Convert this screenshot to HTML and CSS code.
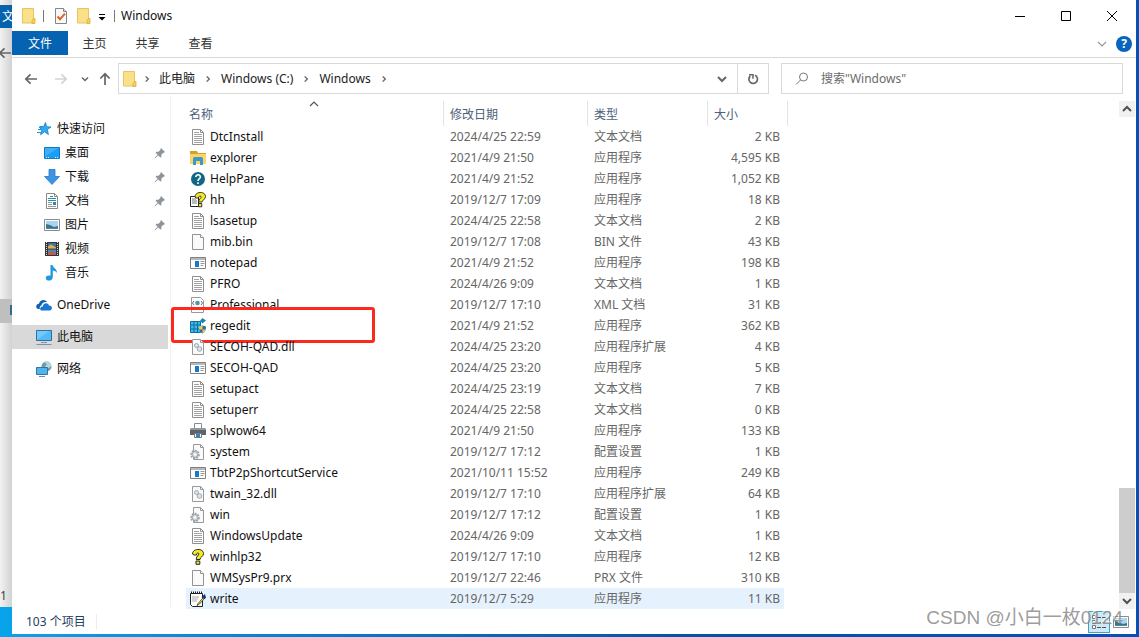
FILE: index.html
```html
<!DOCTYPE html>
<html lang="zh-CN">
<head>
<meta charset="utf-8">
<meta name="viewport" content="width=device-width, initial-scale=1">
<title>Windows</title>
<link rel="stylesheet" href="styles.css">
</head>
<body>
<svg class="sprite" aria-hidden="true">
  <symbol id="folder" viewBox="0 0 16 16"><path d="M1.500.5h11v14.500h-11z" fill="#fbe08a" stroke="#e6c460"/><path d="M12.500 10.500h1.500v5h-3v-3z" fill="#f5cf5c" stroke="#dcae38" stroke-width=".8"/></symbol>
  <symbol id="check-doc" viewBox="0 0 16 16"><path d="M2.500.5h8l3 3v12h-11z" fill="#f8f8f8" stroke="#858585"/><path d="M10.500.5v3h3" fill="#ddd" stroke="#858585"/><path d="M4.500 8.500l2.500 2.700 5-5.500" fill="none" stroke="#e0602a" stroke-width="2"/></symbol>
  <symbol id="chev-down" viewBox="0 0 16 16"><path d="M4 6l4 4 4-4" fill="none" stroke="currentColor" stroke-width="2"/></symbol>
  <symbol id="chev-thin" viewBox="0 0 16 16"><path d="M4 6l4 4 4-4" fill="none" stroke="currentColor" stroke-width="1.200"/></symbol>
  <symbol id="chev-right" viewBox="0 0 16 16"><path d="M6.500 5l3 3-3 3" fill="none" stroke="currentColor" stroke-width="1.600"/></symbol>
  <symbol id="back" viewBox="0 0 16 16"><path d="M14 8H3M7.500 3.300L2.800 8l4.700 4.700" fill="none" stroke="currentColor" stroke-width="1.700"/></symbol>
  <symbol id="pin" viewBox="0 0 12 12"><path d="M7 1l4 4-1 .8-.7-.1-2 2 .2 2-1 .9-2.300-2.200L1 11.500.600 11l3-3.200L1.500 5.600l.9-.9 2.100.1 2-2-.1-.9z" fill="#8c959d"/></symbol>
  <symbol id="star" viewBox="0 0 16 16"><path d="M9.500 1.500l1.200 4.300 4.300.2-3.600 2.600 1 4.900-3.900-2.700-4 3 1.300-4.900L3 6l4.500-.2z" fill="#35a9ee" stroke="#1582c8" stroke-width=".8"/><path d="M4 5.500h3M2 8.500h4M1 11.500h4" stroke="#1f92dc"/></symbol>
  <symbol id="desktop" viewBox="0 0 16 16"><path d="M.5 2.500h15v11H.5z" fill="#1a9df5" stroke="#1576c2"/><path d="M1 11.500L14.500 3H1z" fill="#3cb0fa"/><path d="M2 12.500h1m1 0h1m6 0h1m1 0h1" stroke="#d9f0ff"/></symbol>
  <symbol id="download" viewBox="0 0 16 16"><path d="M5 .5h6v7h4.500L8 15.500.5 7.500H5z" fill="#3c95e4" stroke="#2877c4" stroke-width=".8"/></symbol>
  <symbol id="document" viewBox="0 0 16 16"><path d="M2.500.5h8l3 3v12h-11z" fill="#fff" stroke="#8a8a8a"/><path d="M10.500.5v3h3" fill="none" stroke="#8a8a8a"/><path d="M6 3.500h3M4 5.500h8M4 7.500h8" stroke="#288fa6"/><path d="M4 9.500h4M4 11.500h4M4 13.500h8" stroke="#999"/><path d="M9 9h3v3H9z" fill="#2b8aa6"/></symbol>
  <symbol id="picture" viewBox="0 0 16 16"><path d="M.5 2.500h15v11H.5z" fill="#fff" stroke="#8c8c8c"/><path d="M2 4h12v8H2z" fill="#a8d6f2"/><path d="M2 7l4 1 4 2 4-1v3H2z" fill="#3d7580"/><path d="M2 11h12v1H2z" fill="#4e87b7"/></symbol>
  <symbol id="video" viewBox="0 0 16 16"><path d="M1 1h14v14H1z" fill="#353535"/><path d="M2.500 1v14m11-14v14" stroke="#ddd" stroke-dasharray="1 1"/><path d="M4 2h8v5.500H4z" fill="#3d6fb5"/><path d="M4 5.500l3-2 5 3v1H4z" fill="#e2b53a"/><path d="M4 8.500h8V14H4z" fill="#5682bf"/><path d="M4 12l4-2 4 3v1H4z" fill="#c05b43"/></symbol>
  <symbol id="music" viewBox="0 0 16 16"><path d="M6.500 0h2c.4 3 5 4 4.500 8.500-.2-1.600-1.900-2.500-4.200-2.900V12c0 4.700-7.300 4.700-7 .7.200-2 2.700-2.800 4.700-2z" fill="#1899e0"/></symbol>
  <symbol id="cloud" viewBox="0 0 16 16"><path d="M.5 11c-1-3 1-4.500 2.500-4.300C4 2 9.500 2 11 5c-4-.3-5.500 2-5.500 3.500C3.500 9 3.500 11 4 12H2z" fill="#0c61b1"/><path d="M5 13.500c-2-2 0-4.500 1.800-4C7.300 5.500 12 5.200 13 8.500c4 0 3.500 5 .5 5z" fill="#1877cf"/></symbol>
  <symbol id="pc" viewBox="0 0 16 16"><path d="M.5 1.500h15v10H.5z" fill="#52baf8" stroke="#316f9a"/><path d="M1 11L13 2H1z" fill="#73c9fb"/><path d="M5 13.500h6M.5 15.500h15" stroke="#7795a6"/></symbol>
  <symbol id="network" viewBox="0 0 16 16"><circle cx="10.500" cy="5.500" r="5" fill="#739cab"/><path d="M8 1l3 2-2 3 4 1 2-2V3l-3-2z" fill="#b6d8dd"/><path d="M.5 6.500h11v7H.5z" fill="#50b5ef" stroke="#32759f"/><path d="M3 15.500h6" stroke="#6f8d9d"/></symbol>
  <symbol id="text" viewBox="0 0 16 16"><path d="M2.500.5h8l3 3v12h-11z" fill="#fff" stroke="#8f8f8f"/><path d="M10.500.5v3h3" fill="none" stroke="#8f8f8f"/><path d="M4 3.500h5M4 5.500h8M4 7.500h8M4 9.500h8M4 11.500h8M4 13.500h8" stroke="#a3a3a3"/></symbol>
  <symbol id="blank" viewBox="0 0 16 16"><path d="M2.500.5h8l3 3v12h-11z" fill="#fafafa" stroke="#939393"/><path d="M10.500.5v3h3" fill="#fff" stroke="#939393"/></symbol>
  <symbol id="explorer" viewBox="0 0 16 16"><path d="M0 1h7l1 2h8v11H0z" fill="#d9a124"/><path d="M0 4h16v10H0z" fill="#fbd567"/><path d="M3 15V8.500L4 7h8l1 1.500V15h-3v-4H6v4z" fill="#3d98ce"/></symbol>
  <symbol id="help" viewBox="0 0 16 16"><circle cx="8" cy="8" r="7" fill="#106783"/><path d="M5.800 6c.1-3.200 4.900-2.800 4.500.2C10 8 8 7.700 8 10M8 11.200v1.700" fill="none" stroke="#fff" stroke-width="1.600"/></symbol>
  <symbol id="question" viewBox="0 0 16 16"><path d="M2.500 5c0-6 11-6 11-.5 0 3.500-3.500 3.200-3.500 6H6.300C6 7 9 6.500 8.800 4.800 8.500 3.300 6.500 3.800 6.500 6H4zM6 12h3.800v3.300H6z" fill="#f6e91d" stroke="#222"/></symbol>
  <symbol id="hh" viewBox="0 0 16 16"><path d="M.5 4.500h8v10h-8z" fill="#fff" stroke="#222"/><path d="M2 7h4m-4 2h5m-5 2h5" stroke="#777"/><path d="M5 5c0-6 10.500-6 10.500-.5 0 3.500-3.500 3.200-3.500 5.500H8.700c-.2-3 2.600-3.700 2.400-5.200-.2-1.300-2.600-1-2.600 1.200H6zM8.500 11.500h3.300v3.300H8.500z" fill="#f6e91d" stroke="#222" stroke-width=".9"/></symbol>
  <symbol id="app" viewBox="0 0 16 16"><path d="M.5 2.500h15v11H.5z" fill="#fff" stroke="#808080"/><path d="M1 3h14v2H1z" fill="#b5b8bc"/><path d="M5 6h4v6H5z" fill="#1379c8"/><path d="M10.500 6.500h4m-4 2h4m-4 2h3" stroke="#9a9a9a"/></symbol>
  <symbol id="xml" viewBox="0 0 16 16"><path d="M1.500.5h9l3 3v12h-12z" fill="#fff" stroke="#999"/><path d="M4 4L2.500 6 4 8m7-4l1.500 2L11 8" fill="none" stroke="#666"/><circle cx="7.500" cy="6" r="2.300" fill="#4b98a8"/><path d="M4 11.500h7" stroke="#aaa"/></symbol>
  <symbol id="regedit" viewBox="0 0 16 16"><path d="M.5 3.500h10v11H.5z" fill="#38bcec" stroke="#126d9e"/><path d="M4 3v12M7.500 3v12M0 7h11M0 11h11" stroke="#126d9e"/><path d="M12.500 0L16 2.500 12.500 5.500 10 2.700z" fill="#1686b8"/><path d="M9 8.500l3.500-1 3.500 1c0 4-1.500 6-3.500 7-2-1-3.500-3-3.500-7z" fill="#286da6"/><path d="M12.500 7.500v4H9V8.500zM12.500 11.500h3c-.5 2-1.500 3-3 4z" fill="#f3c550"/></symbol>
  <symbol id="dll" viewBox="0 0 16 16"><path d="M2.500.5h8l3 3v12h-11z" fill="#fafafa" stroke="#999"/><path d="M10.500.5v3h3" fill="none" stroke="#999"/><circle cx="6.500" cy="6.500" r="2" fill="#dde5ea" stroke="#9aa9b3"/><circle cx="9.500" cy="10" r="2.300" fill="#dde5ea" stroke="#9aa9b3"/></symbol>
  <symbol id="ini" viewBox="0 0 16 16"><path d="M3.500.5h7l3 3v12h-10z" fill="#fafafa" stroke="#999"/><path d="M10.500.5v3h3" fill="none" stroke="#999"/><circle cx="5" cy="10.500" r="4" fill="none" stroke="#9aa3a9" stroke-width="1.600" stroke-dasharray="2 1"/><circle cx="5" cy="10.500" r="3" fill="#d5dade" stroke="#9aa3a9"/><circle cx="5" cy="10.500" r="1.200" fill="#fff"/></symbol>
  <symbol id="printer" viewBox="0 0 16 16"><path d="M4.500.5h7v6h-7z" fill="#fff" stroke="#8c8c8c"/><path d="M1 5h14l1 2v5H0V7z" fill="#606468"/><path d="M1 5h14l1 2H0z" fill="#92979b"/><path d="M4.500 10.500h7v4h-7z" fill="#fff" stroke="#777"/><path d="M6 11h4v3H6z" fill="#2b87c9"/></symbol>
  <symbol id="write" viewBox="0 0 16 16"><path d="M.5 2.500h12v13H2.500l-2-2z" fill="#fff" stroke="#222"/><path d="M1 1.500h12" stroke="#222" stroke-width="2" stroke-dasharray="1 1"/><path d="M2 6h7M2 8h6M2 10h5" stroke="#aaa"/><path d="M14.500 5L8 12.500l-1 2L9.500 13 15 7z" fill="#f6df26" stroke="#222" stroke-width=".7"/><path d="M11.500 6L15 3l1 4-2 1z" fill="#1b2c8e"/></symbol>
</svg>

<div class="desktop">
  <div class="behind" aria-hidden="true">
    <span class="behind-tab">文</span>
    <svg class="behind-back"><use href="#back"/></svg>
    <span class="behind-row"></span>
    <span class="behind-count">1</span>
  </div>

  <div class="window">
    <header class="titlebar">
      <svg class="icon"><use href="#folder"/></svg>
      <i class="rule rule-first"></i>
      <svg class="icon"><use href="#check-doc"/></svg>
      <svg class="icon icon-second"><use href="#folder"/></svg>
      <svg class="customize" viewBox="0 0 8 8"><path d="M1 1.500h6" stroke="#000"/><path d="M.5 4h7L4 7.500z"/></svg>
      <i class="rule"></i>
      <h1 class="title">Windows</h1>
      <div class="controls">
        <button class="control" aria-label="最小化"><svg viewBox="0 0 10 10"><path d="M0 5.500h10"/></svg></button>
        <button class="control" aria-label="最大化"><svg viewBox="0 0 10 10"><path d="M.5.5h9v9h-9z"/></svg></button>
        <button class="control" aria-label="关闭"><svg viewBox="0 0 10 10"><path d="M0 0l10 10M10 0L0 10"/></svg></button>
      </div>
    </header>

    <nav class="ribbon">
      <button class="tab tab-file">文件</button>
      <button class="tab">主页</button>
      <button class="tab">共享</button>
      <button class="tab">查看</button>
      <div class="ribbon-end">
        <button class="plain expand" aria-label="展开功能区"><svg class="icon"><use href="#chev-thin"/></svg></button>
        <button class="help" aria-label="帮助">?</button>
      </div>
    </nav>

    <div class="address">
      <button class="plain nav" aria-label="后退"><svg class="icon"><use href="#back"/></svg></button>
      <button class="plain nav nav-off" aria-label="前进"><svg class="icon flip"><use href="#back"/></svg></button>
      <button class="plain recent" aria-label="最近位置"><svg class="small"><use href="#chev-down"/></svg></button>
      <button class="plain up" aria-label="上移"><svg class="icon turn"><use href="#back"/></svg></button>
      <div class="path">
        <svg class="icon"><use href="#folder"/></svg>
        <svg class="sep"><use href="#chev-right"/></svg>
        <a class="crumb" href="#">此电脑</a>
        <svg class="sep"><use href="#chev-right"/></svg>
        <a class="crumb" href="#">Windows (C:)</a>
        <svg class="sep"><use href="#chev-right"/></svg>
        <a class="crumb" href="#">Windows</a>
        <svg class="sep"><use href="#chev-right"/></svg>
        <button class="plain drop" aria-label="以前的位置"><svg class="icon"><use href="#chev-down"/></svg></button>
        <button class="plain refresh" aria-label="刷新"><svg viewBox="0 0 16 16" class="icon"><path d="M10 4.300A4.300 4.300 0 1 1 5.300 5" fill="none" stroke="#666" stroke-width="1.700"/><path d="M4 3.800h4v4" fill="none" stroke="#666" stroke-width="1.500"/></svg></button>
      </div>
      <label class="search">
        <svg class="icon" viewBox="0 0 16 16"><circle cx="9.500" cy="6" r="4" fill="none" stroke="#777"/><path d="M6.500 9L2 13.500" stroke="#777"/></svg>
        <input class="search-box" type="text" aria-label="搜索" placeholder='搜索"Windows"'>
      </label>
    </div>

    <main class="main">
      <nav class="tree">
        <a class="node" href="#"><svg class="icon"><use href="#star"/></svg>快速访问</a>
        <a class="node child" href="#"><svg class="icon"><use href="#desktop"/></svg>桌面<svg class="pin"><use href="#pin"/></svg></a>
        <a class="node child" href="#"><svg class="icon"><use href="#download"/></svg>下载<svg class="pin"><use href="#pin"/></svg></a>
        <a class="node child" href="#"><svg class="icon"><use href="#document"/></svg>文档<svg class="pin"><use href="#pin"/></svg></a>
        <a class="node child" href="#"><svg class="icon"><use href="#picture"/></svg>图片<svg class="pin"><use href="#pin"/></svg></a>
        <a class="node child" href="#"><svg class="icon"><use href="#video"/></svg>视频</a>
        <a class="node child" href="#"><svg class="icon"><use href="#music"/></svg>音乐</a>
        <a class="node group" href="#"><svg class="icon"><use href="#cloud"/></svg>OneDrive</a>
        <a class="node group selected" href="#"><svg class="icon"><use href="#pc"/></svg>此电脑</a>
        <a class="node group" href="#"><svg class="icon"><use href="#network"/></svg>网络</a>
      </nav>

      <div class="files">
        <table class="list">
          <colgroup><col class="col-name"><col class="col-date"><col class="col-type"><col class="col-size"></colgroup>
          <thead>
            <tr><th><span class="head">名称<svg class="sort"><use href="#chev-thin"/></svg></span></th><th><span class="head">修改日期</span></th><th><span class="head">类型</span></th><th><span class="head">大小</span></th></tr>
          </thead>
          <tbody>
            <tr><td><span class="name"><svg class="icon"><use href="#text"/></svg>DtcInstall</span></td><td>2024/4/25 22:59</td><td>文本文档</td><td>2 KB</td></tr>
            <tr><td><span class="name"><svg class="icon"><use href="#explorer"/></svg>explorer</span></td><td>2021/4/9 21:50</td><td>应用程序</td><td>4,595 KB</td></tr>
            <tr><td><span class="name"><svg class="icon"><use href="#help"/></svg>HelpPane</span></td><td>2021/4/9 21:52</td><td>应用程序</td><td>1,052 KB</td></tr>
            <tr><td><span class="name"><svg class="icon"><use href="#hh"/></svg>hh</span></td><td>2019/12/7 17:09</td><td>应用程序</td><td>18 KB</td></tr>
            <tr><td><span class="name"><svg class="icon"><use href="#text"/></svg>lsasetup</span></td><td>2024/4/25 22:58</td><td>文本文档</td><td>2 KB</td></tr>
            <tr><td><span class="name"><svg class="icon"><use href="#blank"/></svg>mib.bin</span></td><td>2019/12/7 17:08</td><td>BIN 文件</td><td>43 KB</td></tr>
            <tr><td><span class="name"><svg class="icon"><use href="#app"/></svg>notepad</span></td><td>2021/4/9 21:52</td><td>应用程序</td><td>198 KB</td></tr>
            <tr><td><span class="name"><svg class="icon"><use href="#text"/></svg>PFRO</span></td><td>2024/4/26 9:09</td><td>文本文档</td><td>1 KB</td></tr>
            <tr><td><span class="name"><svg class="icon"><use href="#xml"/></svg>Professional</span></td><td>2019/12/7 17:10</td><td>XML 文档</td><td>31 KB</td></tr>
            <tr><td><span class="name marked"><svg class="icon"><use href="#regedit"/></svg>regedit</span></td><td>2021/4/9 21:52</td><td>应用程序</td><td>362 KB</td></tr>
            <tr><td><span class="name"><svg class="icon"><use href="#dll"/></svg>SECOH-QAD.dll</span></td><td>2024/4/25 23:20</td><td>应用程序扩展</td><td>4 KB</td></tr>
            <tr><td><span class="name"><svg class="icon"><use href="#app"/></svg>SECOH-QAD</span></td><td>2024/4/25 23:20</td><td>应用程序</td><td>5 KB</td></tr>
            <tr><td><span class="name"><svg class="icon"><use href="#text"/></svg>setupact</span></td><td>2024/4/25 23:19</td><td>文本文档</td><td>7 KB</td></tr>
            <tr><td><span class="name"><svg class="icon"><use href="#text"/></svg>setuperr</span></td><td>2024/4/25 22:58</td><td>文本文档</td><td>0 KB</td></tr>
            <tr><td><span class="name"><svg class="icon"><use href="#printer"/></svg>splwow64</span></td><td>2021/4/9 21:50</td><td>应用程序</td><td>133 KB</td></tr>
            <tr><td><span class="name"><svg class="icon"><use href="#ini"/></svg>system</span></td><td>2019/12/7 17:12</td><td>配置设置</td><td>1 KB</td></tr>
            <tr><td><span class="name"><svg class="icon"><use href="#app"/></svg>TbtP2pShortcutService</span></td><td>2021/10/11 15:52</td><td>应用程序</td><td>249 KB</td></tr>
            <tr><td><span class="name"><svg class="icon"><use href="#dll"/></svg>twain_32.dll</span></td><td>2019/12/7 17:10</td><td>应用程序扩展</td><td>64 KB</td></tr>
            <tr><td><span class="name"><svg class="icon"><use href="#ini"/></svg>win</span></td><td>2019/12/7 17:12</td><td>配置设置</td><td>1 KB</td></tr>
            <tr><td><span class="name"><svg class="icon"><use href="#text"/></svg>WindowsUpdate</span></td><td>2024/4/26 9:09</td><td>文本文档</td><td>1 KB</td></tr>
            <tr><td><span class="name"><svg class="icon"><use href="#question"/></svg>winhlp32</span></td><td>2019/12/7 17:10</td><td>应用程序</td><td>12 KB</td></tr>
            <tr><td><span class="name"><svg class="icon"><use href="#blank"/></svg>WMSysPr9.prx</span></td><td>2019/12/7 22:46</td><td>PRX 文件</td><td>310 KB</td></tr>
            <tr class="hover"><td><span class="name"><svg class="icon"><use href="#write"/></svg>write</span></td><td>2019/12/7 5:29</td><td>应用程序</td><td>11 KB</td></tr>
          </tbody>
        </table>
      </div>

      <div class="scroll">
        <button class="plain arrow" aria-label="向上滚动"><svg class="icon upside"><use href="#chev-down"/></svg></button>
        <div class="track"><div class="thumb"></div></div>
        <button class="plain arrow" aria-label="向下滚动"><svg class="icon"><use href="#chev-down"/></svg></button>
      </div>
    </main>

    <footer class="status">
      <span class="count">103 个项目</span>
      <div class="views">
        <button class="plain view view-on" aria-label="详细信息"><svg class="icon" viewBox="0 0 16 16"><path d="M1.500 1.500h3v3h-3zM1.500 6.500h3v3h-3zM1.500 11.500h3v3h-3z" fill="#fff" stroke="#777"/><path d="M6 3.500h4m1 0h4M6 8.500h4m1 0h4M6 13.500h4m1 0h4" stroke="#555"/></svg></button>
        <button class="plain view" aria-label="大缩略图"><svg class="icon"><use href="#picture"/></svg></button>
      </div>
    </footer>
  </div>
  <div class="watermark">CSDN @小白一枚0124</div>
</div>
</body>
</html>
```
FILE: styles.css
```css
* { box-sizing: border-box; }

body {
  margin: 0;
  font: 12px/16px "Noto Sans", "Noto Sans CJK SC", sans-serif;
  color: #111;
}

button, input { font: inherit; color: inherit; }
a { color: inherit; text-decoration: none; }
svg { display: block; flex: none; }

.sprite { position: absolute; width: 0; height: 0; }
.icon { width: 16px; height: 16px; }
.small { width: 12px; height: 12px; }

.plain {
  display: flex;
  align-items: center;
  justify-content: center;
  padding: 0;
  border: 0;
  background: none;
}

.desktop {
  position: relative;
  display: flex;
  min-height: 100vh;
  padding: 0 3px 3px 12px;
  background: linear-gradient(90deg, #08a3ea 0, #0878c8 30%, #0751a8 60%, #0650b8 100%);
  overflow: hidden;
}

/* Sliver of the window underneath */
.behind {
  position: absolute;
  inset: 0 auto 30px 0;
  width: 12px;
  overflow: hidden;
  background: linear-gradient(90deg, #f2f2f2, #d2d2d2);
}
.behind-tab {
  position: absolute;
  top: 5px;
  left: 0;
  width: 12px;
  height: 23px;
  padding: 4px 0 0 2px;
  background: #0563ae;
  color: #fff;
}
.behind-back { position: absolute; top: 45px; left: -3px; width: 16px; height: 16px; color: #666; }
.behind-row {
  position: absolute;
  top: 299px;
  left: 0;
  width: 12px;
  height: 24px;
  background: linear-gradient(#2f6c8c, #2f6c8c) 10px 6px / 2px 10px no-repeat, #bfbfbf;
}
.behind-count { position: absolute; bottom: 3px; left: 0; color: #444; }

.window {
  position: relative;
  display: flex;
  flex: 1;
  flex-direction: column;
  min-width: 0;
  background: #fff;
}

.titlebar { display: flex; align-items: center; height: 31px; padding-left: 9px; }
.rule { width: 1px; height: 12px; background: #777; }
.rule-first { margin: 0 9px 0 6px; }
.icon-second { margin-left: 7px; }
.customize { width: 8px; height: 8px; margin: 2px 8px 0 6px; }
.title { margin: 0 0 0 6px; font-size: 12px; font-weight: 400; }
.controls { display: flex; margin-left: auto; padding-right: 1px; }
.control {
  display: grid;
  place-items: center;
  width: 46px;
  height: 30px;
  padding: 0;
  border: 0;
  background: none;
}
.control svg { width: 10px; height: 10px; fill: none; stroke: #000; overflow: visible; }

.ribbon { display: flex; height: 27px; border-bottom: 1px solid #d9d9d9; }
.tab { width: 53px; height: 24px; padding: 1px 0 0; border: 0; background: none; color: #333; }
.tab-file { width: 56px; background: #0563b1; color: #fff; }
.ribbon-end { display: flex; align-items: center; gap: 6px; margin-left: auto; padding-right: 4px; }
.expand { color: #999; }
.help {
  width: 16px;
  height: 16px;
  padding: 0;
  border: 0;
  border-radius: 50%;
  background: #0864bd;
  color: #fff;
  font-weight: 700;
  line-height: 16px;
}

.address { display: flex; align-items: flex-start; height: 37px; padding: 5px 13px 0 11px; color: #666; }
.nav { width: 30px; height: 31px; justify-content: flex-start; }
.nav-off { width: 26px; color: #d3d3d3; }
.flip { transform: scaleX(-1); }
.turn { transform: rotate(90deg); }
.upside { transform: rotate(180deg); }
.recent { width: 12px; height: 31px; }
.up { width: 27px; height: 31px; }
.path {
  display: flex;
  flex: 1;
  align-items: center;
  height: 31px;
  padding-left: 3px;
  border: 1px solid #d9d9d9;
}
.sep { width: 14px; height: 16px; margin: 0 6px; }
.path .icon + .sep { margin: 0 5px 0 2px; }
.crumb { color: #222; white-space: nowrap; }
.drop { width: 30px; height: 29px; margin-left: auto; }
.refresh { width: 31px; height: 29px; border-left: 1px solid #d9d9d9; }
.search {
  display: flex;
  align-items: center;
  flex: 0 1 342px;
  gap: 11px;
  height: 31px;
  margin-left: 12px;
  padding: 0 12px;
  border: 1px solid #d9d9d9;
}
.search-box { flex: 1; min-width: 0; padding: 0; border: 0; outline: 0; background: none; }
.search-box::placeholder { color: #6b6b6b; opacity: 1; }

.main { display: flex; flex: 1; }

.tree { flex: none; width: 159px; padding: 22px 2px 0 0; border-right: 1px solid #f3f3f3; }
.node { display: flex; align-items: center; gap: 5px; height: 24px; padding-left: 24px; }
.child { padding-left: 32px; }
.group { margin-top: 8px; }
.selected { background: #d9d9d9; }
.pin { width: 12px; height: 12px; margin: 0 2px 0 auto; }

.files { flex: 1; min-width: 0; padding-left: 15px; }
.list { width: 602px; border-collapse: collapse; table-layout: fixed; }
.col-name { width: 258px; }
.col-date { width: 144px; }
.col-type { width: 120px; }
.col-size { width: 80px; }
.list th { height: 31px; padding: 6px 0 0; font-weight: 400; text-align: left; color: #4c607a; }
.head {
  position: relative;
  display: flex;
  align-items: center;
  height: 25px;
  padding: 2px 0 0 6px;
  border-right: 1px solid #e3e3e3;
}
.list th:first-child .head { padding-left: 3px; }
.sort { position: absolute; top: -5px; left: 120px; width: 16px; height: 16px; transform: rotate(180deg); color: #555; }
.list td { height: 21px; padding: 0 0 0 6px; color: #666; white-space: nowrap; }
.list td:first-child { padding-left: 4px; color: #111; }
.list td:last-child { padding: 0 8px 0 0; text-align: right; }
.name { position: relative; display: flex; align-items: center; gap: 4px; }
.marked::after {
  content: "";
  position: absolute;
  inset: -11px 69px -9px -19px;
  border: 3px solid #fc2a1c;
  border-radius: 3px;
}
.hover { background: linear-gradient(#e5f2fd, #e5f2fd) 0 0 / 598px 100% no-repeat; }

.scroll { display: flex; flex-direction: column; width: 17px; padding: 6px 1px 0 0; }
.arrow { height: 16px; background: #f1f1f1; color: #505050; }
.track { display: flex; flex: 1; flex-direction: column; justify-content: flex-end; }
.thumb { height: 22%; background: #cdcdcd; }

.status { display: flex; align-items: center; height: 25px; padding-left: 14px; color: #26405e; }
.count { padding-right: 10px; border-right: 1px solid #eee; }
.views { display: flex; margin-left: auto; padding-right: 4px; }
.view { width: 22px; height: 22px; }
.view-on { border: 1px solid #3da2c6; background: #cce9f5; }

.watermark {
  position: absolute;
  right: 16px;
  bottom: 7px;
  font: 19px/24px "Liberation Sans", "Noto Sans CJK SC", sans-serif;
  color: rgba(130, 130, 130, .8);
  text-shadow: -1px -1px 0 rgba(255, 255, 255, .7);
}
```
